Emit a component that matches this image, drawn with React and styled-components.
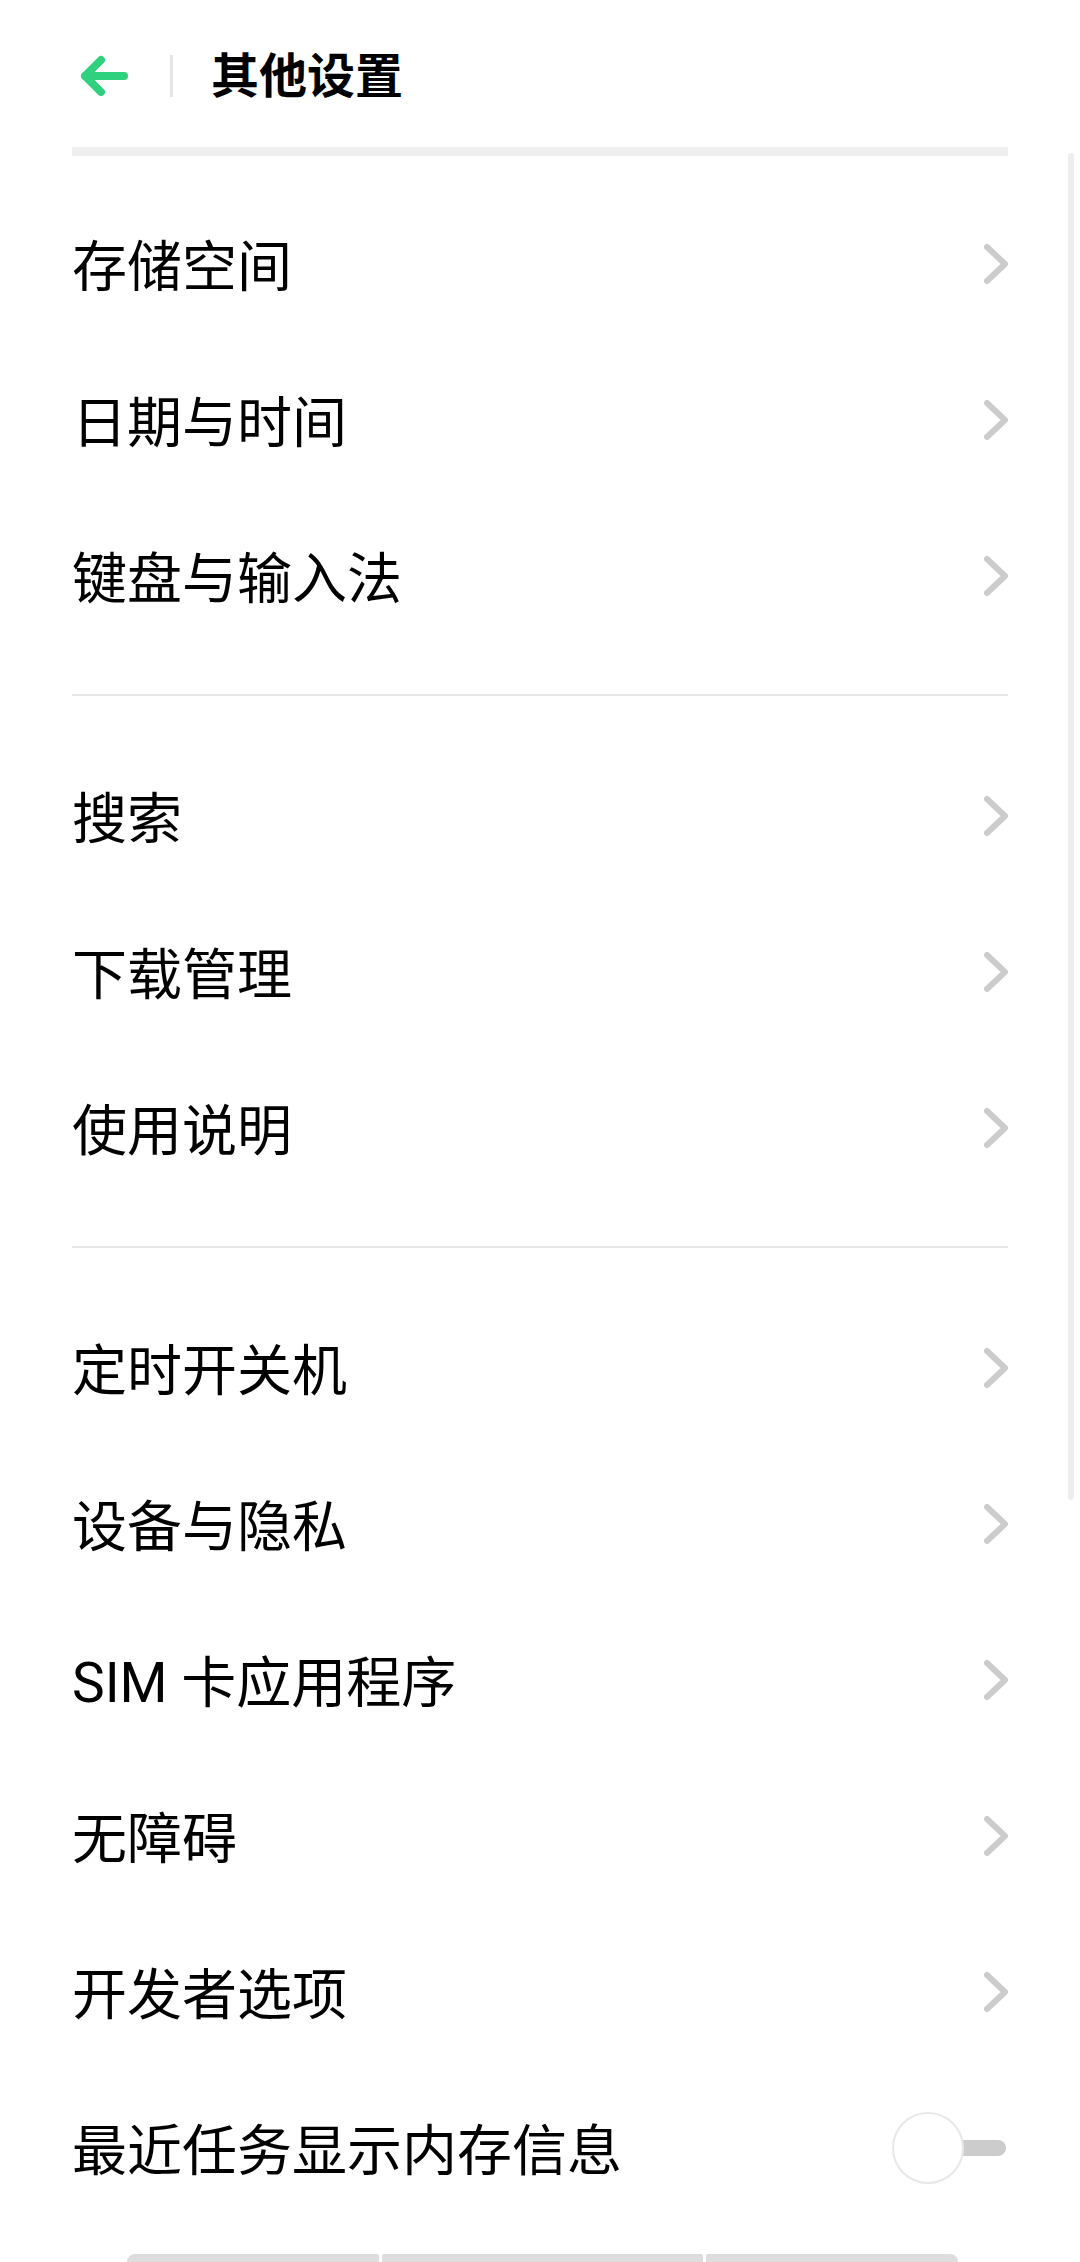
import React from "react";
import styled, { createGlobalStyle } from "styled-components";

const Global = createGlobalStyle`
  html, body {
    margin: 0;
    padding: 0;
    background: #ffffff;
  }
  body {
    font-family: Roboto, "Noto Sans CJK SC", sans-serif;
    overflow: hidden;
  }
`;

const Page = styled.div`
  position: relative;
  width: 1080px;
  height: 2262px;
  background: #ffffff;
  overflow: hidden;
`;

const Header = styled.header`
  display: flex;
  align-items: center;
  height: 142px;
  padding: 5px 0 0 80px;
  box-sizing: content-box;
`;

const BackButton = styled.button`
  display: flex;
  align-items: center;
  justify-content: center;
  width: 48px;
  height: 42px;
  padding: 0;
  border: 0;
  background: transparent;
`;

const HeaderDivider = styled.span`
  width: 3px;
  height: 42px;
  margin-left: 42px;
  background: #e6e6e6;
`;

const Title = styled.h1`
  margin: 0 0 8px 38px;
  font-family: "Noto Sans CJK SC", sans-serif;
  font-size: 48px;
  font-weight: 700;
  color: #000000;
  line-height: 1;
`;

const TopBand = styled.div`
  height: 9px;
  margin: 0 72px;
  background: #efefef;
`;

const List = styled.div`
  padding: 30px 72px 0;
`;

const Row = styled.div`
  display: flex;
  align-items: center;
  justify-content: space-between;
  height: 156px;
`;

const Label = styled.span`
  padding-bottom: 5px;
  font-family: Roboto, "Noto Sans CJK SC", sans-serif;
  font-size: 55px;
  font-weight: 400;
  color: #000000;
  white-space: nowrap;
`;

const Separator = styled.div`
  height: 2px;
  margin: 40px 0 42px;
  background: #e6e6e6;
`;

const ChevronBox = styled.span`
  display: flex;
  width: 26px;
  height: 42px;
  margin-right: -1px;
`;

const Toggle = styled.span`
  position: relative;
  display: block;
  width: 114px;
  height: 72px;
  margin-right: 2px;
`;

const Track = styled.span`
  position: absolute;
  left: 36px;
  right: 0;
  top: 28px;
  height: 16px;
  border-radius: 8px;
  background: #cccccc;
`;

const Thumb = styled.span`
  position: absolute;
  left: 0;
  top: 0;
  width: 68px;
  height: 68px;
  border-radius: 50%;
  border: 2px solid #e8e8e8;
  background: #ffffff;
`;

const Dock = styled.div`
  display: flex;
  gap: 3px;
  width: 831px;
  height: 8px;
  margin: 28px 0 0 127px;
`;

const DockPiece = styled.span`
  flex: 0 0 ${(p) => p.$w}px;
  height: 8px;
  background: #dddddd;
  border-radius: ${(p) => p.$r};
`;

const ScrollBar = styled.div`
  position: absolute;
  top: 153px;
  right: 6px;
  width: 6px;
  height: 1347px;
  border-radius: 3px;
  background: #eeeeee;
`;

const BackArrow = () => (
  <svg width="48" height="42" viewBox="0 0 48 42" fill="none">
    <path
      d="M5 21 H44 M21 5 L5 21 L21 37"
      stroke="#2fd17f"
      strokeWidth="8"
      strokeLinecap="round"
      strokeLinejoin="round"
    />
  </svg>
);

const Chevron = () => (
  <ChevronBox>
    <svg width="26" height="42" viewBox="0 0 26 42" fill="none">
      <path
        d="M4 4 L22 21 L4 38"
        stroke="#cccccc"
        strokeWidth="6"
        strokeLinecap="round"
        strokeLinejoin="round"
      />
    </svg>
  </ChevronBox>
);

const groups = [
  ["存储空间", "日期与时间", "键盘与输入法"],
  ["搜索", "下载管理", "使用说明"],
  ["定时开关机", "设备与隐私", "SIM 卡应用程序", "无障碍", "开发者选项"],
];

export default function App() {
  return (
    <>
      <Global />
      <Page>
        <Header>
          <BackButton aria-label="返回">
            <BackArrow />
          </BackButton>
          <HeaderDivider />
          <Title>其他设置</Title>
        </Header>
        <TopBand />
        <List>
          {groups.map((g, gi) => (
            <React.Fragment key={gi}>
              {gi > 0 && <Separator />}
              {g.map((label) => (
                <Row key={label}>
                  <Label>{label}</Label>
                  <Chevron />
                </Row>
              ))}
            </React.Fragment>
          ))}
          <Row>
            <Label>最近任务显示内存信息</Label>
            <Toggle>
              <Track />
              <Thumb />
            </Toggle>
          </Row>
        </List>
        <Dock>
          <DockPiece $w={252} $r="8px 2px 0 0" />
          <DockPiece $w={321} $r="2px 2px 0 0" />
          <DockPiece $w={252} $r="2px 8px 0 0" />
        </Dock>
        <ScrollBar />
      </Page>
    </>
  );
}
